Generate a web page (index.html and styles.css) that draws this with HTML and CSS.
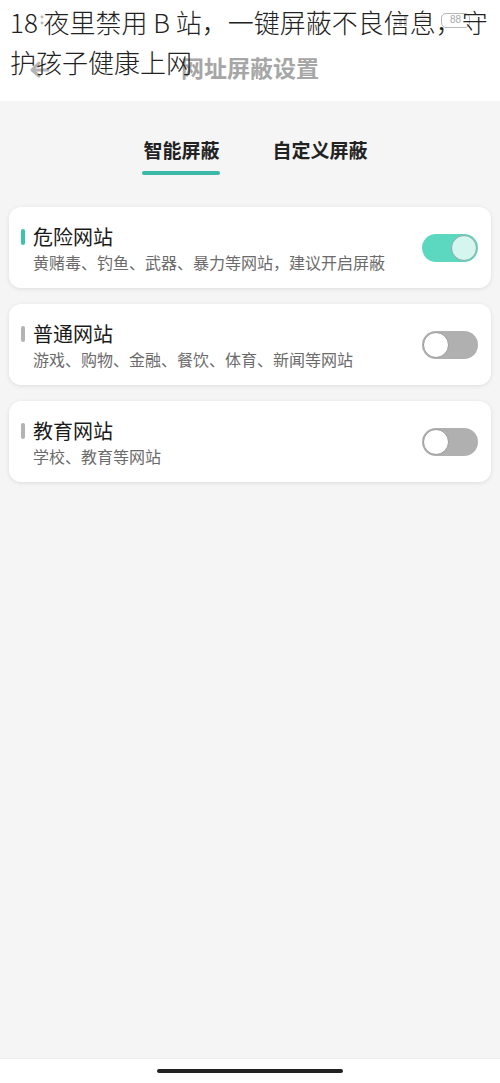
FILE: index.html
```html
<!DOCTYPE html>
<html lang="zh-CN">
<head>
<meta charset="utf-8">
<title>网址屏蔽设置</title>
<link rel="stylesheet" href="styles.css">
</head>
<body>
<div class="screen">
  <header class="header">
    <div class="status">
      <svg class="colon" width="4" height="12" viewBox="0 0 4 12"><circle cx="2" cy="3" r="1.4" fill="#b5b5b5"/><circle cx="2" cy="9" r="1.4" fill="#b5b5b5"/></svg>
      <div class="status-icons">
        <svg class="sig" width="40" height="14" viewBox="0 0 40 14"><rect x="1" y="9" width="3" height="4" fill="#c4c4c4"/><rect x="6" y="6" width="3" height="7" fill="#c4c4c4"/><rect x="11" y="3" width="3" height="10" fill="#c4c4c4"/><path d="M22 6 q8 -6 16 0 M25 9 q5 -4 10 0" stroke="#c4c4c4" stroke-width="1.6" fill="none"/></svg>
        <span class="battery">88</span>
      </div>
    </div>
    <div class="titlebar">
      <svg class="back" width="24" height="20" viewBox="0 0 24 20"><path d="M20 12 H5 M11 5 L4 12 L11 18" stroke="#b3b3b3" stroke-width="3" fill="none" stroke-linecap="round" stroke-linejoin="round"/></svg>
      <span class="page-title">网址屏蔽设置</span>
    </div>
  </header>

  <div class="overlay-title">18 夜里禁用 B 站，一键屏蔽不良信息，守<br>护孩子健康上网</div>

  <main class="main">
    <nav class="tabs">
      <div class="tab active"><span>智能屏蔽</span><i class="underline"></i></div>
      <div class="tab"><span>自定义屏蔽</span></div>
    </nav>

    <section class="cards">
      <div class="card">
        <div class="card-text">
          <div class="card-title"><i class="mark on"></i>危险网站</div>
          <div class="card-sub">黄赌毒、钓鱼、武器、暴力等网站，建议开启屏蔽</div>
        </div>
        <div class="toggle on"><i class="knob"></i></div>
      </div>
      <div class="card">
        <div class="card-text">
          <div class="card-title"><i class="mark"></i>普通网站</div>
          <div class="card-sub">游戏、购物、金融、餐饮、体育、新闻等网站</div>
        </div>
        <div class="toggle"><i class="knob"></i></div>
      </div>
      <div class="card">
        <div class="card-text">
          <div class="card-title"><i class="mark"></i>教育网站</div>
          <div class="card-sub">学校、教育等网站</div>
        </div>
        <div class="toggle"><i class="knob"></i></div>
      </div>
    </section>
  </main>

  <footer class="navbar"><i class="home-bar"></i></footer>
</div>
</body>
</html>
```

FILE: styles.css
```css
* { box-sizing: border-box; }
html, body { margin: 0; padding: 0; }
body {
  width: 500px;
  height: 1083px;
  overflow: hidden;
  font-family: "Noto Sans CJK SC", "Noto Sans", sans-serif;
  background: #f5f5f5;
}
.screen {
  position: relative;
  width: 500px;
  height: 1083px;
  display: flex;
  flex-direction: column;
}
.header {
  background: #fff;
  height: 101px;
  display: flex;
  flex-direction: column;
}
.status {
  height: 40px;
  display: flex;
  align-items: center;
  justify-content: space-between;
  padding: 0 30px 0 40px;
}
.status-icons {
  display: flex;
  align-items: center;
  gap: 8px;
}
.battery {
  display: inline-block;
  width: 29px;
  height: 15px;
  border: 1.5px solid #b8b8b8;
  border-radius: 5px;
  font-size: 10px;
  line-height: 12px;
  text-align: center;
  color: #aaa;
  font-family: "Liberation Sans", sans-serif;
}
.titlebar {
  position: relative;
  height: 58px;
  display: flex;
  align-items: center;
  justify-content: center;
}
.back {
  position: absolute;
  left: 28px;
  top: 18px;
}
.page-title {
  font-size: 23px;
  font-weight: 700;
  color: #a6a6a6;
  margin-top: -4px;
}
.overlay-title {
  position: absolute;
  left: 10px;
  top: 2px;
  font-size: 26px;
  line-height: 40px;
  color: #222;
  white-space: nowrap;
  font-weight: 300;
}
.main {
  flex: 1;
  display: flex;
  flex-direction: column;
}
.tabs {
  display: flex;
  justify-content: center;
  gap: 52px;
  padding: 35px 0 0 10px;
}
.tab {
  display: flex;
  flex-direction: column;
  align-items: center;
  font-size: 19px;
  line-height: 28px;
  font-weight: 700;
  color: #222;
}
.underline {
  display: block;
  width: 78px;
  height: 4px;
  border-radius: 2px;
  background: #3cb9a6;
  margin-top: 7px;
}
.tabs .tab:not(.active) { padding-bottom: 11px; }
.cards {
  display: flex;
  flex-direction: column;
  gap: 16px;
  padding: 0 9px;
  margin-top: 32px;
}
.card {
  background: #fff;
  border-radius: 12px;
  box-shadow: 0 1px 4px rgba(0,0,0,0.10);
  height: 81px;
  display: flex;
  align-items: center;
  justify-content: space-between;
  padding: 0 13px 0 12px;
}
.card-text {
  display: flex;
  flex-direction: column;
  gap: 2px;
  padding-top: 2px;
}
.card-title {
  display: flex;
  align-items: center;
  gap: 8px;
  font-size: 20px;
  line-height: 25px;
  color: #1a1a1a;
}
.mark {
  display: block;
  width: 4px;
  height: 16px;
  border-radius: 2px;
  background: #b3b3b3;
}
.mark.on { background: #3cc3ad; }
.card-sub {
  padding-left: 12px;
  font-size: 16px;
  line-height: 22px;
  color: #6b6b6b;
}
.toggle {
  width: 56px;
  height: 28px;
  border-radius: 14px;
  background: #b0b0b0;
  display: flex;
  align-items: center;
  justify-content: flex-start;
  padding: 1px;
}
.toggle .knob {
  display: block;
  width: 26px;
  height: 26px;
  border-radius: 50%;
  background: #fff;
  border: 1.5px solid #9a9a9a;
}
.toggle.on {
  background: #5cd8c1;
  justify-content: flex-end;
}
.toggle.on .knob {
  background: #d5f6ef;
  border-color: #8fa8a3;
}
.navbar {
  height: 25px;
  background: #fff;
  display: flex;
  justify-content: center;
  align-items: center;
  border-top: 1px solid #efefef;
}
.home-bar {
  display: block;
  width: 186px;
  height: 4px;
  border-radius: 2px;
  background: #222;
}
```
